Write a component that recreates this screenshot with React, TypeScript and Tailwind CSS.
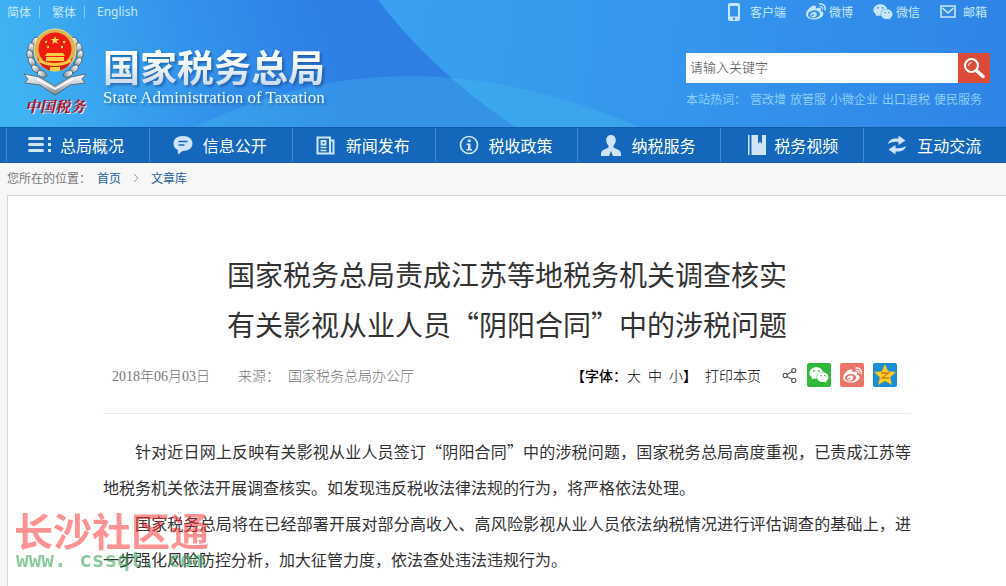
import type { ReactNode } from "react";
import { Share2 } from "lucide-react";
import { FaWeibo, FaWeixin } from "react-icons/fa";

const languages = ["简体", "繁体", "English"];

function PhoneIcon() {
  return (
    <svg width="12" height="18" viewBox="0 0 12 18" aria-hidden="true">
      <path fillRule="evenodd" fill="currentColor" d="M2 0h8q2 0 2 2v14q0 2-2 2H2q-2 0-2-2V2q0-2 2-2zM2 3v10.500h8V3zM6 14.500a1.200 1.200 0 1 0 0 2.400 1.200 1.200 0 0 0 0-2.400z" />
    </svg>
  );
}

function MailIcon() {
  return (
    <svg width="16" height="13" viewBox="0 0 16 13" fill="none" stroke="currentColor" strokeWidth="1.600" aria-hidden="true">
      <path d="M1 1h14v11H1zM2.500 3L8 8l5.500-5" />
    </svg>
  );
}

const topLinks = [
  { label: "客户端", icon: <PhoneIcon />, gap: "gap-2.5" },
  { label: "微博", icon: <FaWeibo size={20} />, gap: "gap-[3px]" },
  { label: "微信", icon: <FaWeixin size={20} />, gap: "gap-[3px]" },
  { label: "邮箱", icon: <MailIcon />, gap: "gap-[7px]" },
];

const hotWords = ["营改增", "放管服", "小微企业", "出口退税", "便民服务"];

const nav: { label: string; icon: ReactNode }[] = [
  {
    label: "总局概况",
    icon: (
      <svg width="24" height="16" viewBox="0 0 24 16" fill="currentColor">
        <rect x="0" y="0" width="16" height="3" rx="1.5" />
        <rect x="0" y="6" width="16" height="3" rx="1.5" />
        <rect x="0" y="12" width="16" height="3" rx="1.5" />
        <rect x="20" y="0" width="3" height="3" />
        <rect x="20" y="6" width="3" height="3" />
        <rect x="20" y="12" width="3" height="3" />
      </svg>
    ),
  },
  {
    label: "信息公开",
    icon: (
      <svg width="20" height="19" viewBox="0 0 20 19">
        <path d="M10 0C4 0 .5 3 .5 7.500c0 3 1.500 5.200 4.200 6.500L5 18.500 9.500 15C16 15 19.500 12 19.500 7.500S16 0 10 0z" fill="currentColor" />
        <path d="M5.500 5.500h9M5.500 9h6" stroke="#1467bb" strokeWidth="1.300" />
      </svg>
    ),
  },
  {
    label: "新闻发布",
    icon: (
      <svg width="19" height="19" viewBox="0 0 19 19" fill="none" stroke="currentColor" strokeWidth="2">
        <path d="M14 17.500H1.500v-16H14zM14 4.500h3.500v13H13" />
        <path d="M4.500 11.500h6M4.500 14.500h6" strokeWidth="1.500" />
        <path d="M5.500 5h4v3.500h-4z" strokeWidth="1.800" />
      </svg>
    ),
  },
  {
    label: "税收政策",
    icon: (
      <svg width="20" height="20" viewBox="0 0 20 20">
        <circle cx="10" cy="10" r="8.500" fill="none" stroke="currentColor" strokeWidth="1.700" />
        <path d="M8.700 4.500h3v2.500h-3zM7.500 8.500h4v5.500h1.500v1.500h-5.500V14h1.500v-4H7.500z" fill="currentColor" />
      </svg>
    ),
  },
  {
    label: "纳税服务",
    icon: (
      <svg width="20" height="21" viewBox="0 0 20 21" fill="currentColor">
        <path d="M10 0c3 0 4.800 2 4.800 5 0 2.500-1 4.500-2.300 5.500v2c2 1.500 7.500 2 7.500 6.500v2h-8l-2-5-2 5H0v-2c0-4.500 5.500-5 7.500-6.500v-2C6.200 9.500 5.200 7.500 5.200 5c0-3 1.800-5 4.800-5z" />
      </svg>
    ),
  },
  {
    label: "税务视频",
    icon: (
      <svg width="24" height="20" viewBox="0 0 24 20" fill="currentColor">
        <path d="M6 0h1.500v20H6zM9.500 0H16v9l2-2.500L20 9V0h4v20H9.500z" />
      </svg>
    ),
  },
  {
    label: "互动交流",
    icon: (
      <svg width="18" height="20" viewBox="0 0 18 20" fill="currentColor">
        <path d="M0 9C1 4.500 5 3 10.500 3.500V.5l7 5-7 4.500V7C6.500 6.500 3 7 0 9z" />
        <path d="M18 11c-1 4.500-5 6-10.500 5.500v3l-7-5 7-4.500v3c4 .5 7.500 0 10.500-2z" />
      </svg>
    ),
  },
];

const paragraphs = [
  "针对近日网上反映有关影视从业人员签订“阴阳合同”中的涉税问题，国家税务总局高度重视，已责成江苏等地税务机关依法开展调查核实。如发现违反税收法律法规的行为，将严格依法处理。",
  "国家税务总局将在已经部署开展对部分高收入、高风险影视从业人员依法纳税情况进行评估调查的基础上，进一步强化风险防控分析，加大征管力度，依法查处违法违规行为。",
];

// [x, y, angle] of each leaf in the left half of the wreath
const leaves = [
  [12, 14, 25],
  [8, 20, 5],
  [7, 27, -15],
  [9, 34, -35],
  [13, 41, -50],
  [19, 46, -65],
];

function HeaderBackdrop() {
  return (
    <svg className="absolute inset-0 h-full w-full" viewBox="0 0 1006 127" preserveAspectRatio="none" aria-hidden="true">
      <defs>
        <linearGradient id="sky" gradientUnits="userSpaceOnUse" x1="0" y1="50" x2="310" y2="-40">
          <stop offset="0" stopColor="#40b4f3" />
          <stop offset="0.550" stopColor="#3393ec" />
          <stop offset="1" stopColor="#2d7fe4" />
        </linearGradient>
        <linearGradient id="wave" gradientUnits="userSpaceOnUse" x1="400" y1="0" x2="1006" y2="60">
          <stop offset="0" stopColor="#38a0ee" />
          <stop offset="0.500" stopColor="#3495ec" />
          <stop offset="1" stopColor="#2f84e6" />
        </linearGradient>
      </defs>
      <rect width="1006" height="127" fill="url(#sky)" />
      <path d="M378 0Q432 71 515 127H1006V0z" fill="url(#wave)" />
      <path d="M195 127Q300 76 410 76T640 127z" fill="#45bff0" opacity="0.300" />
    </svg>
  );
}

function Emblem() {
  return (
    <svg width="64" height="68" viewBox="0 0 64 68" aria-hidden="true">
      <defs>
        <linearGradient id="silver" x1="0" y1="0" x2="0" y2="1">
          <stop offset="0" stopColor="#ffffff" />
          <stop offset="0.500" stopColor="#c5ccd2" />
          <stop offset="1" stopColor="#77818a" />
        </linearGradient>
      </defs>
      <g fill="url(#silver)" stroke="#4d5860" strokeWidth="0.800">
        {leaves.map(([x, y, angle]) => (
          <g key={y}>
            <ellipse cx={x} cy={y} rx="3" ry="5" transform={`rotate(${angle} ${x} ${y})`} />
            <ellipse cx={64 - x} cy={y} rx="3" ry="5" transform={`rotate(${-angle} ${64 - x} ${y})`} />
          </g>
        ))}
        <path d="M1 46l15 3 16 9 16-9 15-3-4 5 3 4-15 2-13 9q-2 2-4 0l-13-9-15-2 3-4z" />
      </g>
      <path d="M14 51l18 10 18-10" fill="none" stroke="#fff" strokeWidth="1.500" />
      <circle cx="32" cy="22" r="21" fill="#dcb450" stroke="#f2da8a" strokeWidth="1" />
      <circle cx="32" cy="21" r="16.500" fill="#f01c10" />
      <path d="M14 29q4 14 18 14t18-14q-5 7-9 7H23q-4 0-9-7z" fill="#d6201a" />
      <path d="M24 25h16l2 3H22zM23 29h18v4H23zM16 31q7 4 16 4t16-4v3q-7 4-16 4t-16-4zM27 39h10v4H27z" fill="#f7cd45" />
      <path d="M32 8l1.100 3H36.300l-2.600 2 1 3.100-2.700-1.900-2.700 1.900 1-3.100-2.600-2h3.200z" fill="#ffe14d" />
      <g fill="#ffe14d">
        <circle cx="23" cy="14" r="1.200" />
        <circle cx="25" cy="19" r="1.200" />
        <circle cx="39" cy="19" r="1.200" />
        <circle cx="41" cy="14" r="1.200" />
      </g>
    </svg>
  );
}

function SiteHeader() {
  return (
    <header className="relative h-[127px]">
      <HeaderBackdrop />
      <div className="relative">
        <div className="flex h-[23px] items-center justify-between pl-[7px] pr-[19px] text-xs text-[#c5e6fb]">
          <div className="flex items-center">
            {languages.map((lang, i) => (
              <span key={lang} className="flex items-center">
                {i > 0 && <span className="ml-2 mr-3 h-3 border-l border-[#8fcaf5]" />}
                <a href="#" className={lang === "English" ? "font-['Noto_Sans',sans-serif]" : ""}>
                  {lang}
                </a>
              </span>
            ))}
          </div>
          <div className="flex items-center gap-5">
            {topLinks.map((item) => (
              <a key={item.label} href="#" className={`flex items-center ${item.gap}`}>
                {item.icon}
                {item.label}
              </a>
            ))}
          </div>
        </div>

        <div className="flex justify-between pl-[23px] pr-4 pt-px">
          <a href="#" className="flex gap-4 pt-1">
            <span className="flex flex-col items-center">
              <Emblem />
              <span className="font-['Noto_Serif_CJK_SC','Noto_Sans_CJK_SC',serif] text-[15px] font-bold italic leading-5 text-[#b8101c] [text-shadow:1px_1px_0_#d5e6f5]">
                中国税务
              </span>
            </span>
            <span className="flex flex-col pt-[18px] drop-shadow-[2px_2px_1px_rgba(20,60,120,0.5)]">
              <span className="bg-linear-to-b from-white from-30% to-[#c9d8ec] bg-clip-text text-[37px] font-bold leading-10 text-transparent">
                国家税务总局
              </span>
              <span className="pt-0.5 font-['Liberation_Serif',serif] text-[17px] leading-5 text-[#eaf4fd]">
                State Administration of Taxation
              </span>
            </span>
          </a>

          <div className="w-[304px] pt-[29px]">
            <form className="flex h-[30px]" onSubmit={(e) => e.preventDefault()}>
              <input
                type="text"
                aria-label="站内搜索"
                placeholder="请输入关键字"
                className="min-w-0 flex-1 bg-white px-1 pb-0.5 text-[13px] font-light text-[#333] outline-none placeholder:text-[#444]"
              />
              <button type="submit" aria-label="搜索" className="flex w-8 items-center justify-center bg-[#dc4a3a] text-white">
                <svg width="22" height="22" viewBox="0 0 22 22" fill="none" stroke="currentColor" strokeLinecap="round">
                  <circle cx="8.500" cy="8.500" r="6.500" strokeWidth="2.200" />
                  <path d="M14 14l6 5.500" strokeWidth="3.500" />
                  <path d="M5.500 8.500a3 3 0 0 1 3-3" strokeWidth="1" />
                </svg>
              </button>
            </form>
            <div className="flex gap-1 pt-2 text-xs leading-4 text-[#8ecdf8]">
              <span>本站热词：</span>
              {hotWords.map((word) => (
                <a key={word} href="#">
                  {word}
                </a>
              ))}
            </div>
          </div>
        </div>
      </div>
    </header>
  );
}

function MainNav() {
  return (
    <nav className="grid h-9 grid-cols-7 border-y border-t-[#0f5cab] border-b-[#1a5a9c] bg-[#1467bb] pl-1.5">
      {nav.map((item) => (
        <a
          key={item.label}
          href="#"
          className="flex items-center gap-2 whitespace-nowrap border-l border-[#3f8bd3] pl-[21px] text-base text-white"
        >
          <span className="flex w-6 justify-center text-[#cfe4f8]">{item.icon}</span>
          {item.label}
        </a>
      ))}
    </nav>
  );
}

function QzoneIcon() {
  return (
    <svg width="24" height="24" viewBox="0 0 24 24" aria-hidden="true">
      <rect width="24" height="24" rx="2" fill="#1b8fd6" />
      <path d="M12 1.500l3.100 6.900 7.400.8-5.500 5 1.600 7.400-6.600-3.800-6.600 3.800L7 14.200l-5.500-5 7.400-.8z" fill="#fdd228" stroke="#f2a81c" strokeWidth="0.600" />
      <path d="M8 10h7.500l-6.500 5h7" fill="none" stroke="#d97a10" strokeWidth="1.300" />
    </svg>
  );
}

function ArticleMeta() {
  return (
    <div className="flex items-center justify-between border-b border-[#ececec] pb-[26px] pl-[9px] pr-[14px] font-['Liberation_Serif','Noto_Sans_CJK_SC',serif] text-sm font-light">
      <div className="flex pt-1 text-[#777]">
        <span className="mr-7">2018年06月03日</span>
        <span className="mr-2">来源：</span>
        <span>国家税务总局办公厅</span>
      </div>
      <div className="flex items-center text-black">
        <div className="flex items-center pt-1">
          <span className="font-medium">【字体：</span>
          <span className="flex gap-[7px]">
            <button type="button">大</button>
            <button type="button">中</button>
            <button type="button">小</button>
          </span>
          <span className="font-medium">】</span>
          <button type="button" className="ml-2">
            打印本页
          </button>
        </div>
        <div className="ml-5 flex items-center gap-[9px]">
          <button type="button" aria-label="分享" className="text-[#555]">
            <Share2 size={17} strokeWidth={1.5} />
          </button>
          <a href="#" aria-label="分享到微信" className="flex size-6 items-center justify-center rounded-xs bg-[#2fb83a] text-white">
            <FaWeixin size={20} />
          </a>
          <a href="#" aria-label="分享到微博" className="flex size-6 items-center justify-center rounded-xs bg-[#ec7468] text-white">
            <FaWeibo size={19} />
          </a>
          <a href="#" aria-label="分享到QQ空间">
            <QzoneIcon />
          </a>
        </div>
      </div>
    </div>
  );
}

export default function App() {
  return (
    <div lang="zh-CN" className="relative min-h-screen overflow-hidden bg-[#f7f7f7] font-['Noto_Sans_CJK_SC',sans-serif]">
      <SiteHeader />
      <MainNav />

      <div className="flex h-8 items-center pb-0.5 pl-[7px] text-xs text-[#1f629c]">
        <span className="mr-1.5 text-[#777]">您所在的位置：</span>
        <a href="#">首页</a>
        <svg className="mx-3" width="6" height="10" viewBox="0 0 6 10" fill="none" stroke="#7d9fc0" aria-hidden="true">
          <path d="M1 1l4 4-4 4" />
        </svg>
        <a href="#">文章库</a>
      </div>

      <main className="ml-[7px] border-l border-t border-[#d6d6d6] bg-white pb-3">
        <article className="mx-auto max-w-[808px] pt-[53px]">
          <h1 className="text-center text-[28px] leading-[50px] text-[#333]">
            国家税务总局责成江苏等地税务机关调查核实
            <br />
            有关影视从业人员“阴阳合同”中的涉税问题
          </h1>
          <div className="pt-[14px]">
            <ArticleMeta />
          </div>
          <div className="pt-[19px] text-justify text-base leading-9 text-[#333]">
            {paragraphs.map((text) => (
              <p key={text} className="indent-8">
                {text}
              </p>
            ))}
          </div>
        </article>
      </main>

      {/* Watermark stamped over the lower left corner */}
      <div className="pointer-events-none absolute left-3.5 top-[506px] font-bold opacity-50">
        <div className="text-[39px] leading-[46px] text-[#ff2828]">长沙社区通</div>
        <div className="pl-0.5 font-['DejaVu_Sans_Mono',monospace] text-[21px] leading-4 text-[#1d9440]">www. cssqt. com</div>
      </div>
    </div>
  );
}
